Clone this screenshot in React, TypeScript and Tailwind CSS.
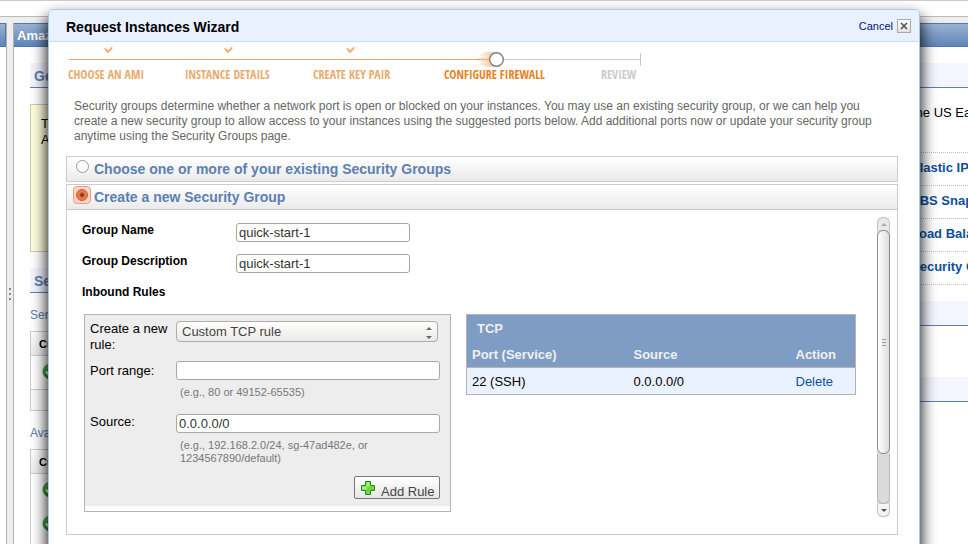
import React, { useState } from "react";

const SANS = "font-['Liberation_Sans',Arial,sans-serif]";

function SectionHeading({ children }: { children?: React.ReactNode }) {
  return (
    <h2 className="h-[25px] border-b border-[#5b80b2] bg-[#f5f5ff] pl-1 text-[14px] leading-[26px] font-bold text-[#5b80b2]">
      {children}
    </h2>
  );
}

function GreenCheck() {
  return (
    <svg width="17" height="17" viewBox="0 0 17 17" className="block" aria-hidden="true">
      <defs>
        <linearGradient id="green" x1="0" y1="0" x2="0" y2="1">
          <stop offset="0" stopColor="#5cb85c" />
          <stop offset="1" stopColor="#1f8a1f" />
        </linearGradient>
      </defs>
      <circle cx="8.5" cy="8.5" r="7.5" fill="url(#green)" stroke="#3f9a3f" />
      <path d="M4 8.5l3 3.5 6-7" fill="none" stroke="#fff" strokeWidth="2.4" />
    </svg>
  );
}

function StatusTable({ rows, footer }: { rows: number; footer?: boolean }) {
  return (
    <table className="w-full border-collapse border border-[#ccc]">
      <thead>
        <tr className="h-6 border-b border-[#ccc] bg-linear-to-b from-white to-[#ececec]">
          <th className="pl-2 text-left text-[11px] leading-4 font-bold text-black">Current</th>
        </tr>
      </thead>
      <tbody>
        {Array.from({ length: rows }, (_, i) => (
          <tr key={i} className="h-[34px]">
            <td className="pb-[2px] pl-[11px]">
              <GreenCheck />
            </td>
          </tr>
        ))}
        {footer && (
          <tr className="h-[21px] border-t border-[#ccc]">
            <td className="bg-[#fafafa]" />
          </tr>
        )}
      </tbody>
    </table>
  );
}

const RESOURCES = ["Elastic IPs", "EBS Snapshots", "Load Balancers", "Security Groups"];

function Console() {
  return (
    <div className="flex h-full flex-col bg-[#eeeeee]">
      <div className="h-[17px] shrink-0 border-y border-t-[#ccc] border-b-[#bbb] bg-white" />
      <div className="flex min-h-0 flex-1 pt-[6px]">
        <div className="w-[7px] border-r border-[#b0b0b0] bg-white">
          <div className="h-6 border border-l-0 border-[#5078aa] bg-linear-to-b from-[#9ab3d3] to-[#5f84b6]" />
        </div>
        <div className="flex w-[6px] flex-col items-center justify-center gap-[3px] pt-[21px]">
          <i className="size-[2px] bg-[#888]" />
          <i className="size-[2px] bg-[#888]" />
          <i className="size-[2px] bg-[#888]" />
        </div>
        <div className="flex min-w-0 flex-1 flex-col border-l border-[#b0b0b0] bg-white">
          <div className="h-6 shrink-0 border-y border-[#5078aa] bg-linear-to-b from-[#9ab3d3] to-[#5f84b6] pl-[3px] text-[13px] leading-6 font-bold text-white">
            Amazon
          </div>
          <div className="grid min-h-0 grid-cols-[minmax(0,1fr)_57px] pt-4 pl-4">
            <div>
              <SectionHeading>Get</SectionHeading>
              <div className="mt-4 h-[148px] border border-[#ccccaa] bg-[#ffffdd] px-[10px] pt-[11px] text-[13px] leading-4">
                To
                <br />
                All
              </div>
              <div className="mt-4">
                <SectionHeading>Service</SectionHeading>
              </div>
              <p className="mt-[15px] mb-2 text-[12px] leading-[15px] text-[#5b80b2]">Service</p>
              <StatusTable rows={1} footer />
              <p className="mt-[15px] mb-2 text-[12px] leading-[15px] text-[#5b80b2]">Available</p>
              <StatusTable rows={3} />
            </div>
            <div className="overflow-hidden whitespace-nowrap">
              <SectionHeading />
              <p className="mt-4 h-12 pl-px text-[13px] leading-[18px]">the US East</p>
              <ul>
                {RESOURCES.map((name) => (
                  <li
                    key={name}
                    className="h-[33px] border-t border-dotted border-[#bbb] text-[13px] leading-[30px] font-bold text-[#0b4f9e]"
                  >
                    {name}
                  </li>
                ))}
              </ul>
              <div className="border-t border-dotted border-[#bbb] pt-4">
                <SectionHeading />
              </div>
              <div className="pt-[51px]">
                <SectionHeading />
              </div>
            </div>
          </div>
        </div>
      </div>
    </div>
  );
}

const STEPS = [
  { label: "CHOOSE AN AMI", color: "text-[#e9ab6c]" },
  { label: "INSTANCE DETAILS", color: "text-[#e9ab6c]" },
  { label: "CREATE KEY PAIR", color: "text-[#e9ab6c]" },
  { label: "CONFIGURE FIREWALL", color: "text-[#e8821e]" },
  { label: "REVIEW", color: "text-[#cccccc]" },
];

function Stepper() {
  return (
    <div className="pt-1 pl-[2px]">
      <svg width="574" height="21" viewBox="0 0 574 21" className="block" aria-hidden="true">
        <defs>
          <linearGradient id="trail" x1="0" x2="1">
            <stop offset="0" stopColor="#f3a655" stopOpacity="0.1" />
            <stop offset="1" stopColor="#f0a050" stopOpacity="0.6" />
          </linearGradient>
        </defs>
        <path d="M1 13.5H412" stroke="#e9a469" />
        <path d="M412 13.5H572.5M572.5 7v13" stroke="#c8c8c8" fill="none" />
        {[37, 157, 279].map((x) => (
          <path key={x} d={`M${x} 2v2l3 3 4-4v-2l-4 3.5z`} fill="#efb27c" stroke="#efb27c" strokeWidth="0.8" />
        ))}
        <g fill="url(#trail)">
          <rect x="414" y="6" width="12" height="2" />
          <rect x="411" y="8" width="14" height="2" />
          <rect x="413" y="10" width="12" height="2" />
          <rect x="407" y="12" width="16" height="3" />
          <rect x="412" y="15" width="12" height="2" />
          <rect x="410" y="17" width="15" height="2" />
          <rect x="414" y="19" width="12" height="2" />
        </g>
        <circle cx="428.5" cy="13.5" r="6.8" fill="#fff" stroke="#808080" strokeWidth="1.4" />
      </svg>
      <ol className="grid grid-cols-[117px_128px_131px_157px_40px] font-['Open_Sans_Condensed','Roboto_Condensed','Open_Sans',sans-serif] text-[12px] leading-4 font-bold whitespace-nowrap">
        {STEPS.map((step) => (
          <li key={step.label} className={step.color}>
            {step.label}
          </li>
        ))}
      </ol>
    </div>
  );
}

const RADIO = "size-[13px] shrink-0 appearance-none rounded-full border border-[#999] bg-white";
const FIELD =
  "h-[19px] rounded-[3px] border border-[#a9a5a0] bg-white px-[2px] text-[13px] leading-4 text-[#333] outline-none";

function GroupField({ id, label, value }: { id: string; label: string; value: string }) {
  return (
    <div className="flex h-[31px] items-start">
      <label htmlFor={id} className="w-[154px] text-[12px] leading-[15px] font-bold text-black">
        {label}
      </label>
      <input id={id} defaultValue={value} className={`${FIELD} w-[174px]`} />
    </div>
  );
}

function RuleForm() {
  return (
    <form
      className="w-[367px] shrink-0 border border-[#b4b4b4] pb-[5px] text-[13px] leading-4 text-black"
      onSubmit={(e) => e.preventDefault()}
    >
      <div className="grid grid-cols-[86px_264px] bg-[#ededed] pt-[6px] pb-[7px] pl-[5px]">
        <label htmlFor="rule">
          Create a new
          <br />
          rule:
        </label>
        <div className="relative h-10 w-[262px]">
          <select
            id="rule"
            className="h-[21px] w-full appearance-none rounded-[4px] border border-[#b0aca8] bg-linear-to-b from-white to-[#ebe9e7] pl-[5px] text-[13px] leading-4 text-[#444]"
          >
            <option>Custom TCP rule</option>
          </select>
          <svg
            width="6"
            height="12"
            viewBox="0 0 6 12"
            className="pointer-events-none absolute top-[6px] right-[6px]"
            aria-hidden="true"
          >
            <path d="M0 3L3 0L6 3zM0 9L3 12L6 9z" fill="#666" />
          </svg>
        </div>
        <label htmlFor="port" className="pt-[2px]">
          Port range:
        </label>
        <div className="h-[53px]">
          <input id="port" className={`${FIELD} block w-full`} />
          <p className="pt-[6px] pl-1 text-[11px] leading-[13px] text-[#777]">(e.g., 80 or 49152-65535)</p>
        </div>
        <label htmlFor="source">Source:</label>
        <div className="h-[62px]">
          <input id="source" defaultValue="0.0.0.0/0" className={`${FIELD} block w-full`} />
          <p className="pt-[6px] pl-1 text-[11px] leading-[13px] text-[#777]">
            (e.g., 192.168.2.0/24, sg-47ad482e, or
            <br />
            1234567890/default)
          </p>
        </div>
        <button
          type="submit"
          className="col-start-2 flex h-[23px] w-[86px] items-start justify-self-end rounded-[2px] border border-[#777] bg-linear-to-b from-white to-[#e6e6e6] pl-[6px] text-[#444]"
        >
          <svg width="14" height="14" viewBox="0 0 14 14" className="mt-1 mr-[6px] shrink-0" aria-hidden="true">
            <path d="M4.5.5h5v4h4v5h-4v4h-5v-4h-4v-5h4z" fill="#6fd63c" stroke="#16901a" />
            <path d="M5.5 1.5h3v4h-3v3h-4v-3h4z" fill="#b4ef8a" />
          </svg>
          <span className="pt-[7px] whitespace-nowrap">Add Rule</span>
        </button>
      </div>
    </form>
  );
}

function RulesTable() {
  return (
    <table className="w-full table-fixed border-collapse border border-[#b4b4b4] text-left text-[13px] leading-4">
      <colgroup>
        <col className="w-[162px]" />
        <col className="w-[162px]" />
        <col />
      </colgroup>
      <thead className="bg-[#7f9cc4] text-[#f0f0f0]">
        <tr className="h-[27px]">
          <th colSpan={3} className="pt-[2px] pl-[10px]">
            TCP
          </th>
        </tr>
        <tr className="h-[26px]">
          <th className="pt-[2px] pl-[5px]">Port (Service)</th>
          <th className="pt-[2px] pl-[5px]">Source</th>
          <th className="pt-[2px] pl-[5px]">Action</th>
        </tr>
      </thead>
      <tbody className="border-t border-[#b4b4b4] bg-[#ebf2ff] text-black">
        <tr className="h-[27px]">
          <td className="pt-[2px] pl-[5px]">22 (SSH)</td>
          <td className="pt-[2px] pl-[5px]">0.0.0.0/0</td>
          <td className="pt-[2px] pl-[5px]">
            <a href="#delete" className="text-[#0b4f9e]">
              Delete
            </a>
          </td>
        </tr>
      </tbody>
    </table>
  );
}

function ScrollBar() {
  return (
    <div className="flex w-[13px] shrink-0 flex-col rounded-[6px] bg-[#dcdad8]" aria-hidden="true">
      <div className="flex h-[13px] items-center justify-center rounded-t-[6px] border border-b-0 border-[#c4c2c0] bg-[#ebeae9]">
        <svg width="6" height="3" viewBox="0 0 6 3">
          <path d="M0 3L3 0L6 3z" fill="#aaa" />
        </svg>
      </div>
      <div className="flex h-[224px] flex-col items-center justify-center gap-[2px] rounded-[6px] border border-[#8e8c8a] bg-linear-to-r from-white to-[#dfddda]">
        <i className="h-px w-[4px] bg-[#999]" />
        <i className="h-px w-[4px] bg-[#999]" />
        <i className="h-px w-[4px] bg-[#999]" />
      </div>
      <div className="flex-1 rounded-b-[6px] border-x border-b border-[#b8b6b4]" />
      <div className="flex h-[13px] items-center justify-center rounded-b-[6px] border border-t-0 border-[#c4c2c0] bg-[#f6f5f4]">
        <svg width="6" height="3" viewBox="0 0 6 3">
          <path d="M0 0L3 3L6 0z" fill="#555" />
        </svg>
      </div>
    </div>
  );
}

function Wizard() {
  const [mode, setMode] = useState("new");
  return (
    <div
      role="dialog"
      aria-label="Request Instances Wizard"
      className="rounded-t-[6px] border border-[#a5cbe8] bg-white shadow-[0_9px_15px_1px_rgba(0,0,0,0.95)]"
    >
      <header className="flex h-8 items-center justify-between rounded-t-[5px] border-b border-[#c5def0] bg-[#e9f1fe] pr-2 pl-[17px]">
        <h1 className="pt-[3px] text-[14px] leading-5 font-bold text-black">Request Instances Wizard</h1>
        <div className="flex items-center gap-1">
          <a href="#cancel" className="text-[11px] leading-4 text-[#00117f]">
            Cancel
          </a>
          <button
            type="button"
            aria-label="Close"
            className="flex size-[14px] items-center justify-center border border-[#aaa] bg-linear-to-b from-white to-[#e2e2e2]"
          >
            <svg width="8" height="8" viewBox="0 0 8 8" aria-hidden="true">
              <path d="M1 1l6 6M7 1l-6 6" stroke="#555" strokeWidth="1.6" />
            </svg>
          </button>
        </div>
      </header>
      <div className="pr-[21px] pb-10 pl-[17px]">
        <Stepper />
        <p className="mt-4 pr-[6px] pl-2 text-[12px] leading-[15px] text-[#666]">
          Security groups determine whether a network port is open or blocked on your instances. You may use an existing
          security group, or we can help you create a new security group to allow access to your instances using the
          suggested ports below. Add additional ports now or update your security group anytime using the Security Groups
          page.
        </p>
        <label className="mt-3 flex h-[26px] border border-[#ccc] bg-linear-to-b from-white to-[#ebebeb] pl-[9px] text-[14px] leading-6 font-bold text-[#5b80b2]">
          <input
            type="radio"
            name="mode"
            checked={mode === "existing"}
            onChange={() => setMode("existing")}
            className={`${RADIO} mt-[3px] mr-[5px]`}
          />
          Choose one or more of your existing Security Groups
        </label>
        <section className="mt-[2px] border border-[#ccc]">
          <label className="flex h-[25px] border-b border-[#ccc] bg-linear-to-b from-white to-[#ebebeb] pl-[6px] text-[14px] leading-6 font-bold text-[#5b80b2]">
            <span className="mt-[1px] mr-[3px] flex size-[18px] items-center justify-center rounded-[4px] border border-[#f09a7c] bg-[#f9d8cc]">
              <input
                type="radio"
                name="mode"
                checked={mode === "new"}
                onChange={() => setMode("new")}
                className="size-3 appearance-none rounded-full border border-[#c85a34] bg-[radial-gradient(circle,#7a3a24_0_1px,#f0784c_3px)]"
              />
            </span>
            Create a new Security Group
          </label>
          <div className="flex justify-between pt-[7px] pr-[7px] pb-[17px] pl-[15px]">
            <div className="flex-1 pt-[6px] pb-[5px]">
              <GroupField id="name" label="Group Name" value="quick-start-1" />
              <GroupField id="description" label="Group Description" value="quick-start-1" />
              <h2 className="text-[12px] leading-[15px] font-bold text-black">Inbound Rules</h2>
              <div className="mt-[14px] flex items-start gap-[15px] pr-[21px] pl-[2px]">
                <RuleForm />
                <RulesTable />
              </div>
            </div>
            <ScrollBar />
          </div>
        </section>
      </div>
    </div>
  );
}

export default function App() {
  return (
    <main className={`relative h-screen overflow-hidden bg-white text-black ${SANS}`}>
      <Console />
      <div className="absolute inset-0 px-12 pt-[9px]">
        <Wizard />
      </div>
    </main>
  );
}
